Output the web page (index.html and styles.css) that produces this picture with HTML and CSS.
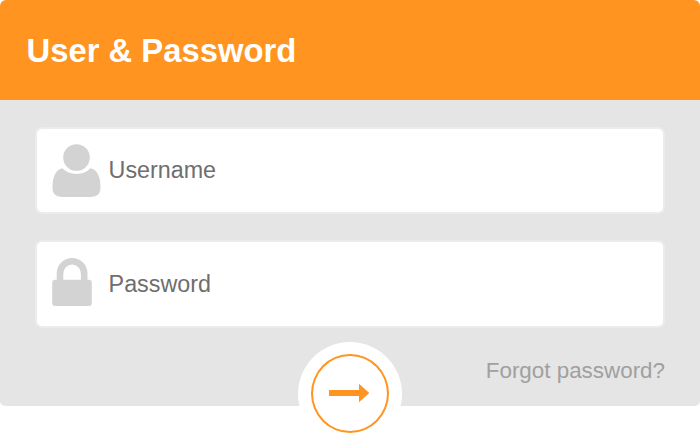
FILE: index.html
```html
<!DOCTYPE html>
<html lang="en">
<head>
  <meta charset="UTF-8" />
  <meta name="viewport" content="width=device-width, initial-scale=1.0"/>
  <title>User &amp; Password</title>
  <link rel="stylesheet" href="styles.css">
</head>
<body>
  <form class="login" onsubmit="return false">
    <h1 class="login-header">User &amp; Password</h1>

    <div class="login-body">
      <label class="field">
        <svg class="icon" viewBox="0.500 0.500 50 56">
          <circle cx="25" cy="15" r="13.3"/>
          <path d="M11 25.8C14.5 29.5 19 31.5 25 31.5S35.500 29.500 39 25.800C46 26.800 49 35 49 45C49 51 46 54.500 39 54.500H11C4 54.500 1 51 1 45C1 35 4 26.800 11 25.800Z"/>
        </svg>
        <input type="text" placeholder="Username" />
      </label>

      <label class="field field-password">
        <svg class="icon" viewBox="0 0 50 56">
          <path d="M8 26V17.400a12.100 12.100 0 0 1 24.200 0V26" class="shackle"/>
          <rect x="0.200" y="23.800" width="39.600" height="26.200" rx="3"/>
        </svg>
        <input type="password" placeholder="Password" />
      </label>

      <a class="forgot" href="#">Forgot password?</a>
    </div>

    <!-- Submit button -->
    <button class="submit" type="submit" aria-label="Login">
      <svg viewBox="0 0 74 75">
        <path d="M16 34H46V27.800L56.300 37L46 46.300V40H16Z"/>
      </svg>
    </button>
  </form>
</body>
</html>
```

FILE: styles.css
```css
* {
  margin: 0;
  padding: 0;
  box-sizing: border-box;
  font-family: Arial, 'Liberation Sans', sans-serif;
}

body {
  background-color: #fff;
  overflow: hidden;
}

.login {
  position: relative;
  width: 700px;
  height: 445px;
}

.login-header {
  height: 100px;
  padding: 0 26.5px;
  background-color: #ff9421;
  border-radius: 6px 6px 0 0;
  color: #fff;
  font-size: 32.8px;
  font-weight: bold;
  line-height: 101px;
}

.login-body {
  display: flex;
  flex-direction: column;
  height: 306px;
  padding: 27px 35px 0;
  background-color: #e5e5e5;
  border-radius: 0 0 5px 5px;
}

.field {
  display: flex;
  align-items: center;
  height: 87px;
  margin-bottom: 26px;
  padding-left: 15px;
  background-color: #fff;
  border: 2px solid #ececec;
  border-radius: 7px;
}

.field-password {
  height: 88px;
}

.icon {
  width: 50px;
  height: 56px;
  fill: #d3d3d3;
}

.shackle {
  fill: none;
  stroke: #d3d3d3;
  stroke-width: 6.6;
}

.field input {
  flex: 1;
  min-width: 0;
  height: 100%;
  margin-left: 6.6px;
  background: transparent;
  border: none;
  outline: none;
  font-size: 23.3px;
}

.field input::placeholder {
  color: #6e6e6e;
}

.forgot {
  align-self: flex-end;
  margin-top: 4px;
  color: #a0a0a0;
  font-size: 22.4px;
  line-height: 26px;
  text-decoration: none;
}

/* sits over the bottom edge of the form */
.submit {
  position: absolute;
  left: 298px;
  top: 342px;
  width: 104px;
  height: 104px;
  padding: 12px 13px 13px;
  background-color: #fff;
  border: none;
  border-radius: 50%;
  cursor: pointer;
}

.submit svg {
  display: block;
  width: 78px;
  height: 79px;
  border: 2px solid #ff9421;
  border-radius: 50%;
  fill: #ff9421;
}
```
